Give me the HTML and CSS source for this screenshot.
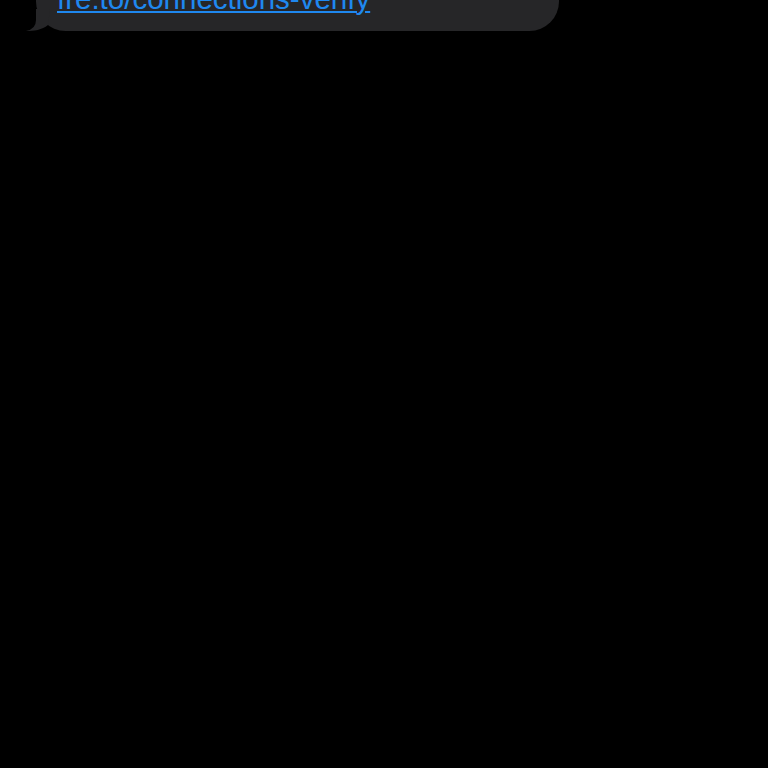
FILE: index.html
```html
<!DOCTYPE html>
<html lang="en">
<head>
  <meta charset="UTF-8" />
  <meta name="viewport" content="width=device-width, initial-scale=1.0"/>
  <title>Messages</title>
  <link rel="stylesheet" href="styles.css">
</head>
<body>
  <div class="thread">
    <div class="bubble incoming">
      <svg class="tail" width="24" height="22" viewBox="0 0 24 22">
        <path d="M10 0 L10 11 Q10 20 0 22 C8 22 16 21 22 16 L24 0 Z" fill="#262628"/>
      </svg>
      <a class="link" href="#">fre.to/connections-verify</a>
    </div>
  </div>
</body>
</html>
```

FILE: styles.css
```css
html, body { margin: 0; padding: 0; background: #000; }
body {
  font-family: 'Liberation Sans', 'Helvetica', sans-serif;
  width: 768px;
  height: 768px;
  overflow: hidden;
}
.thread { padding-left: 36px; }
.bubble {
  position: relative;
  margin-top: -28px;
  width: 523px;
  box-sizing: border-box;
  padding: 10px 21px 15px;
  background: #262628;
  border-radius: 30px;
  font-size: 29.5px;
  line-height: 34px;
}
.tail {
  position: absolute;
  left: -10px;
  bottom: 0;
  display: block;
}
.link {
  color: #1f88ef;
  text-decoration: underline;
  text-underline-offset: 2px;
  text-decoration-thickness: 2px;
}
```
